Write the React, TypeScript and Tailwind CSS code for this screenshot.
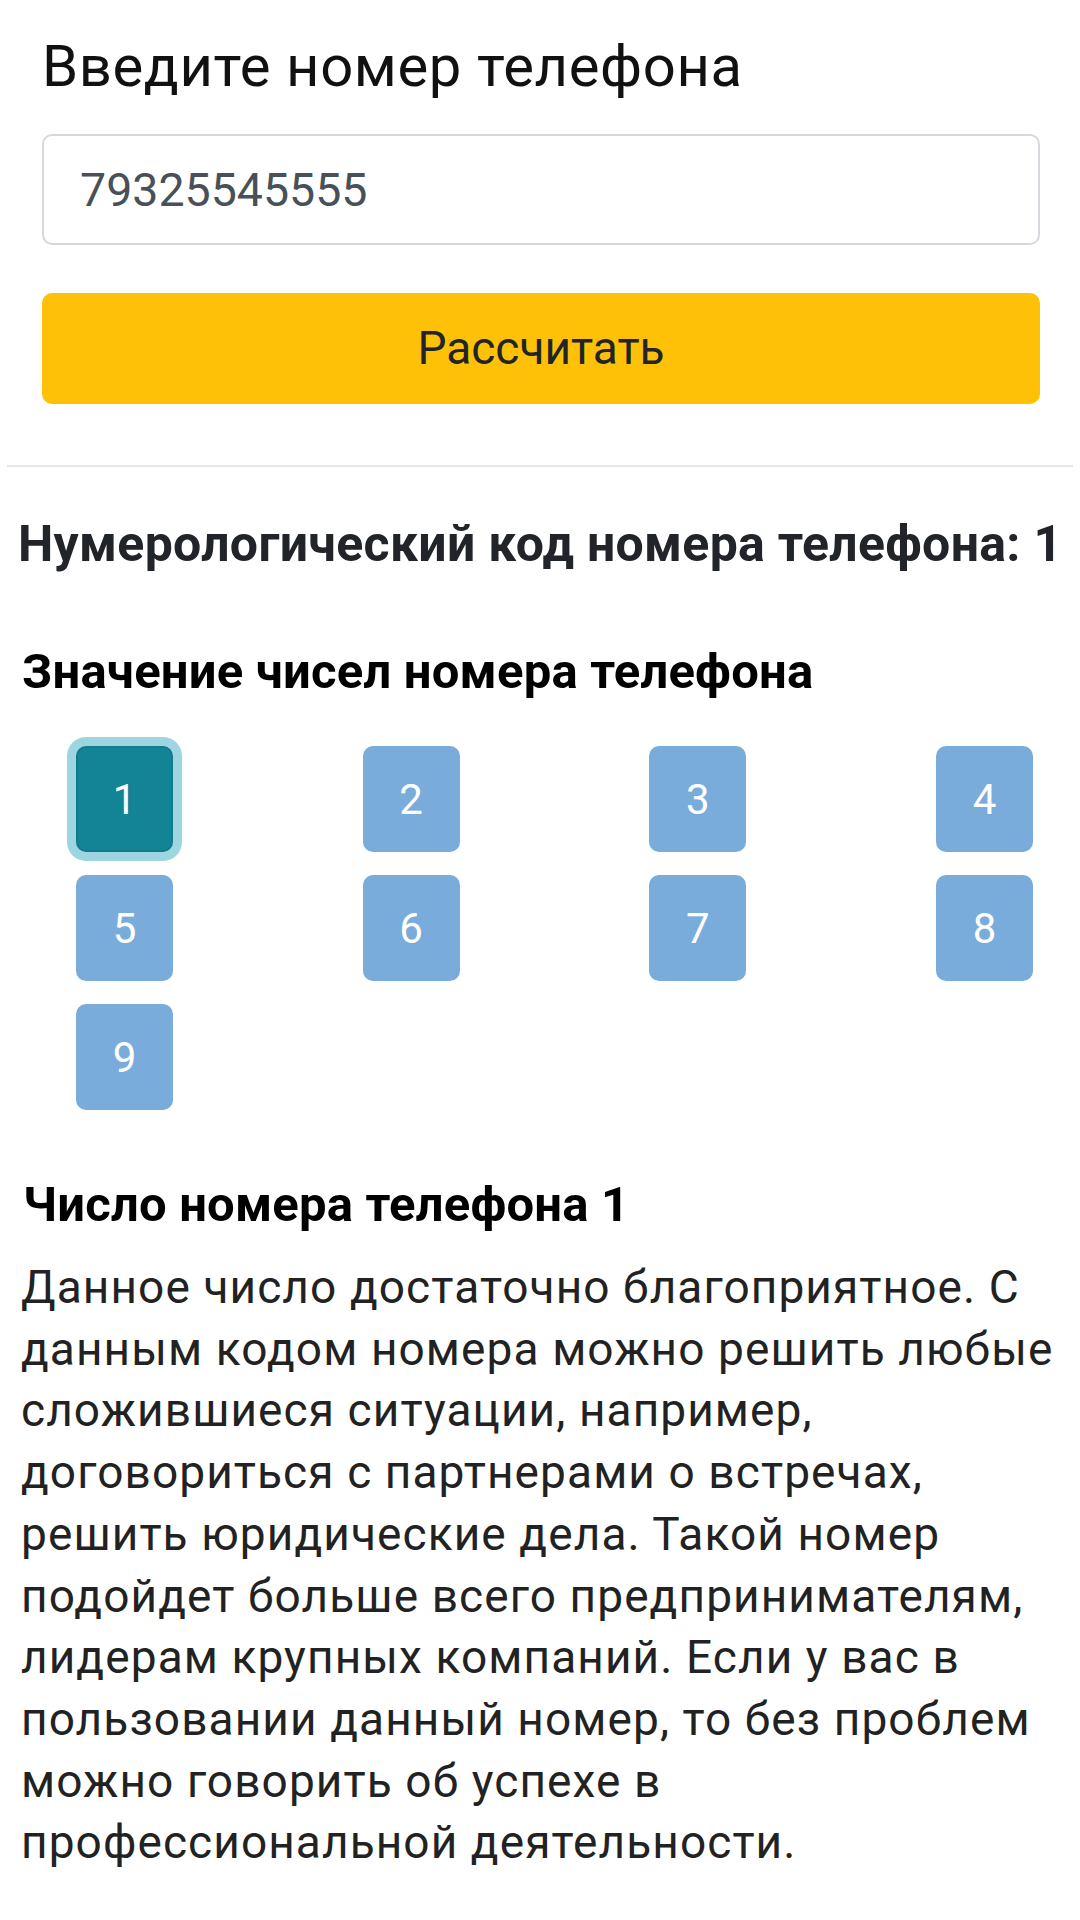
const digits = [1, 2, 3, 4, 5, 6, 7, 8, 9]

const text =
  'Данное число достаточно благоприятное. С данным кодом номера можно решить любые сложившиеся ситуации, например, договориться с партнерами о встречах, решить юридические дела. Такой номер подойдет больше всего предпринимателям, лидерам крупных компаний. Если у вас в пользовании данный номер, то без проблем можно говорить об успехе в профессиональной деятельности.'

export default function App() {
  return (
    <div className="min-h-[1920px] w-[1080px] bg-white font-['Roboto',_'Noto_Sans',_sans-serif]">
      <div className="pl-[42px] pr-[40px] pt-[33px]">
        <h1 className="text-[58px] leading-[66px] font-normal tracking-[0.6px] text-[#111]">Введите номер телефона</h1>
        <input
          readOnly
          value="79325545555"
          className="mt-[35px] block h-[111px] w-full rounded-[10px] border-2 border-[#d5d9dd] bg-white pl-[36px] text-[46.5px] text-[#495057] outline-none"
        />
        <button className="mt-[48px] flex h-[111px] w-full items-center justify-center rounded-[10px] bg-[#ffc107] text-[46px] text-[#212529]">
          Рассчитать
        </button>
      </div>

      <div className="mx-[7px] mt-[61px] h-[2px] bg-[#e6e6e6]" />

      <div className="pl-[18px] pr-[8px]">
        <h2 className="mt-[48px] whitespace-nowrap text-[50px] leading-[58px] font-bold tracking-[0.3px] text-[#212529]">
          Нумерологический код номера телефона: 1
        </h2>
        <h3 className="mt-[70px] pl-[4px] text-[49px] leading-[58px] font-bold tracking-[0.2px] text-black">
          Значение чисел номера телефона
        </h3>

        <div className="mt-[45px] ml-[58px] mr-[39px] grid grid-cols-[repeat(4,97px)] justify-between gap-y-[23px]">
          {digits.map((d) => (
            <div
              key={d}
              className={
                d === 1
                  ? 'flex h-[106px] w-[97px] items-center justify-center rounded-[10px] border-2 border-[#117a8b] bg-[#138496] text-[42px] text-white shadow-[0_0_0_9px_#9dd6e0]'
                  : 'flex h-[106px] w-[97px] items-center justify-center rounded-[10px] bg-[#7aacdb] text-[42px] text-white'
              }
            >
              {d}
            </div>
          ))}
        </div>

        <h4 className="mt-[66px] pl-[5px] text-[49px] leading-[58px] font-bold tracking-[0.2px] text-black">
          Число номера телефона 1
        </h4>
        <p className="mt-[23px] pl-[3px] text-[46px] leading-[61.7px] tracking-[1.1px] text-[#222]">{text}</p>
      </div>
    </div>
  )
}
